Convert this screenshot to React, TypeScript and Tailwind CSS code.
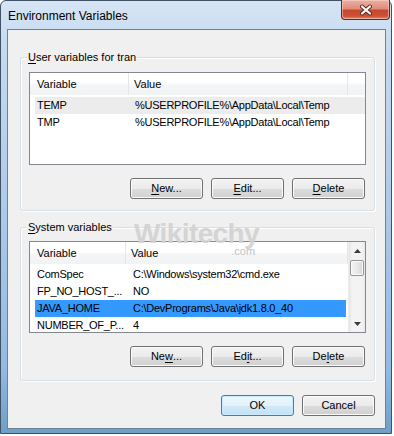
import React from "react";

type Row = { name: string; value: string; state?: "hover" | "selected" };

const userRows: Row[] = [
  { name: "TEMP", value: "%USERPROFILE%\\AppData\\Local\\Temp", state: "hover" },
  { name: "TMP", value: "%USERPROFILE%\\AppData\\Local\\Temp" },
];

const systemRows: Row[] = [
  { name: "ComSpec", value: "C:\\Windows\\system32\\cmd.exe" },
  { name: "FP_NO_HOST_...", value: "NO" },
  { name: "JAVA_HOME", value: "C:\\DevPrograms\\Java\\jdk1.8.0_40", state: "selected" },
  { name: "NUMBER_OF_P...", value: "4" },
];

function Key({ children }: { children: React.ReactNode }) {
  return <span className="underline underline-offset-[2px]">{children}</span>;
}

function Btn({ children, primary }: { children: React.ReactNode; primary?: boolean }) {
  return (
    <div
      className={
        "h-[21px] w-[73px] rounded-[3px] border flex items-center justify-center text-[11px] text-black " +
        (primary
          ? "border-[#3c7fb1] bg-[linear-gradient(#eef7fd_0%,#e2f1fb_50%,#d0e9f7_51%,#c3e2f5_100%)] shadow-[inset_0_0_0_1px_#c9eaff]"
          : "border-[#707070] bg-[linear-gradient(#f3f3f3_0%,#ebebeb_50%,#dddddd_51%,#cfcfcf_100%)] shadow-[inset_0_0_0_1px_#fbfbfb]")
      }
    >
      {children}
    </div>
  );
}

function Scrollbar() {
  return (
    <div className="w-[17px] flex flex-col bg-[linear-gradient(90deg,#e6e6e6,#f3f3f3_20%,#f3f3f3_80%,#e9e9e9)] border-l border-[#ececec]">
      <div className="h-[17px] flex items-center justify-center">
        <svg width="7" height="4" viewBox="0 0 7 4">
          <path d="M3.5 0 L7 4 L0 4 Z" fill="#3b3b3b" />
        </svg>
      </div>
      <div className="mt-[1px] mx-[1px] h-[16px] rounded-[2px] border border-[#959595] bg-[linear-gradient(90deg,#f4f4f4,#e9e9e9_50%,#d6d6d6)] shadow-[inset_0_0_0_1px_#fafafa]" />
      <div className="flex-1" />
      <div className="h-[17px] flex items-center justify-center">
        <svg width="7" height="4" viewBox="0 0 7 4">
          <path d="M0 0 L7 0 L3.5 4 Z" fill="#3b3b3b" />
        </svg>
      </div>
    </div>
  );
}

function ListView({
  rows,
  headW,
  rowW,
  scroll,
  height,
}: {
  rows: Row[];
  headW: number;
  rowW: number;
  scroll?: boolean;
  height: number;
}) {
  return (
    <div
      className="mx-[8px] border border-[#828790] bg-white flex overflow-hidden"
      style={{ height }}
    >
      <div className="flex-1 min-w-0">
        <div className="h-[22px] flex bg-[linear-gradient(#ffffff_0%,#ffffff_45%,#f4f5f7_55%,#f2f3f5_100%)] text-[11px]">
          <div className="border-r border-[#e3e7ec] pl-[7px] flex items-center" style={{ width: headW }}>
            Variable
          </div>
          <div className="flex-1 pl-[5px] flex items-center border-r border-[#e3e7ec]">Value</div>
          {!scroll && <div className="w-[17px]" />}
        </div>
        <div className="pt-[2px]">
          {rows.map((r) => (
            <div
              key={r.name}
              className={
                "ml-[5px] h-[17px] flex items-center text-[11px] tracking-[-0.25px] whitespace-nowrap " +
                (r.state === "selected"
                  ? "mr-[2px] bg-[#3399ff] border border-dotted border-[#d97a1e]"
                  : r.state === "hover"
                  ? "bg-[#ececec]"
                  : "")
              }
            >
              <div className={r.state === "selected" ? "pl-[1px]" : "pl-[2px]"} style={{ width: rowW }}>
                {r.name}
              </div>
              <div className={r.state === "selected" ? "-ml-[1px]" : ""}>{r.value}</div>
            </div>
          ))}
        </div>
      </div>
      {scroll && <Scrollbar />}
    </div>
  );
}

function GroupBox({
  label,
  children,
  className,
}: {
  label: React.ReactNode;
  children: React.ReactNode;
  className?: string;
}) {
  return (
    <div
      className={
        "relative ml-[12px] mr-[10px] h-[154px] rounded-[3px] border border-[#d5dfe5] shadow-[1px_1px_0_#ffffff,inset_1px_1px_0_#ffffff] " +
        (className ?? "")
      }
    >
      <div className="absolute -top-[8px] left-[6px] px-[1px] bg-[#f0f0f0] text-[11px] leading-[14px]">
        {label}
      </div>
      {children}
    </div>
  );
}

function ButtonRow({ keys }: { keys: [React.ReactNode, React.ReactNode, React.ReactNode] }) {
  return (
    <div className="mt-[13px] flex justify-end gap-[8px] pr-[9px]">
      <Btn>{keys[0]}</Btn>
      <Btn>{keys[1]}</Btn>
      <Btn>{keys[2]}</Btn>
    </div>
  );
}

export default function App() {
  return (
    <div className="relative w-[394px] h-[436px] bg-white font-['Liberation_Sans',Arial,sans-serif] text-black overflow-hidden">
      {/* window frame */}
      <div className="w-[392px] h-[434px] rounded-t-[6px] border border-[#3f5266] bg-[linear-gradient(180deg,#d6e5f5_0%,#c6daf0_10%,#afcbea_45%,#93bae2_85%,#6f9fc6_100%)] flex flex-col pl-[6px] pr-[5px] pb-[4px]">
        {/* title bar */}
        <div className="h-[28px] flex justify-between -ml-[6px] -mr-[5px]">
          <div className="pl-[7px] pt-[8px] text-[12px] leading-[15px] text-black">Environment Variables</div>
          <div className="-mt-[1px] mr-[1px] w-[49px] h-[20px] rounded-b-[4px] border border-t-0 border-[#5c2a22] bg-[linear-gradient(180deg,#eab0a2_0%,#df8e7c_45%,#c8472d_55%,#cc5236_85%,#e08a72_100%)] shadow-[inset_0_0_0_1px_rgba(255,220,210,0.5)] flex items-center justify-center">
            <svg width="14" height="12" viewBox="0 0 14 12">
              <path d="M3 2.5 L11 9.5 M11 2.5 L3 9.5" stroke="#5a2620" strokeWidth="4" strokeLinecap="round" />
              <path d="M3 2.5 L11 9.5 M11 2.5 L3 9.5" stroke="#ffffff" strokeWidth="2.2" strokeLinecap="round" />
            </svg>
          </div>
        </div>

        {/* client area */}
        <div className="flex-1 border border-[#6e8196] bg-[#f0f0f0] flex flex-col">
          <GroupBox
            className="mt-[27px]"
            label={
              <>
                <Key>U</Key>ser variables for tran
              </>
            }
          >
            <div className="pt-[14px]">
              <ListView rows={userRows} headW={99} rowW={100} height={93} />
              <ButtonRow
                keys={[
                  <><Key>N</Key>ew...</>,
                  <><Key>E</Key>dit...</>,
                  <><Key>D</Key>elete</>,
                ]}
              />
            </div>
          </GroupBox>

          <GroupBox
            className="mt-[16px]"
            label={
              <>
                <Key>S</Key>ystem variables
              </>
            }
          >
            <div className="pt-[13px]">
              <ListView rows={systemRows} headW={96} rowW={98} scroll height={92} />
              <ButtonRow
                keys={[
                  <>Ne<Key>w</Key>...</>,
                  <>Ed<Key>i</Key>t...</>,
                  <>De<Key>l</Key>ete</>,
                ]}
              />
            </div>
          </GroupBox>

          <div className="mt-[14px] flex justify-end gap-[8px] mr-[10px]">
            <Btn primary>OK</Btn>
            <Btn>Cancel</Btn>
          </div>
        </div>
      </div>

      {/* watermark */}
      <div className="absolute left-[134px] top-[218px] pointer-events-none select-none flex flex-col items-end">
        <div className="text-[28px] leading-[32px] font-bold tracking-[-0.6px] text-[#d2d2d2] opacity-90">
          Wikitechy
        </div>
        <div className="-mt-[4px] mr-[4px] text-[11px] leading-[11px] text-[#c4c4c4]">.com</div>
      </div>
    </div>
  );
}
